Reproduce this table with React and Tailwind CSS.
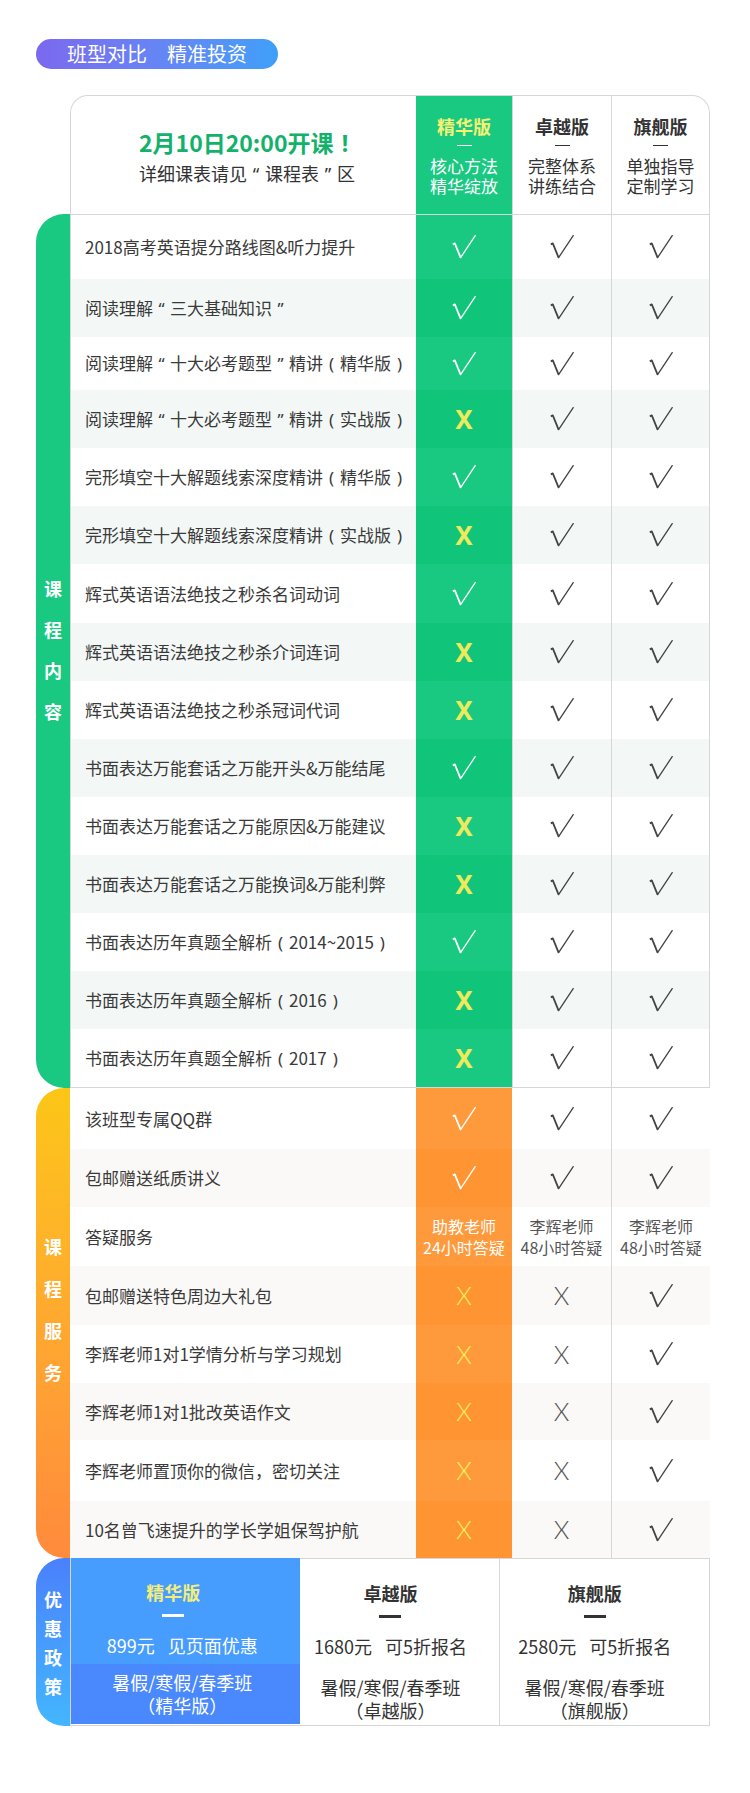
const courses = [
  ['2018高考英语提分路线图&听力提升', true, 'h-[64px]'],
  ['阅读理解“三大基础知识”', true, 'h-[58px]'],
  ['阅读理解“十大必考题型”精讲（精华版）', true, 'h-[53px]'],
  ['阅读理解“十大必考题型”精讲（实战版）', false, 'h-[58px]'],
  ['完形填空十大解题线索深度精讲（精华版）', true, 'h-[58px]'],
  ['完形填空十大解题线索深度精讲（实战版）', false, 'h-[58px]'],
  ['辉式英语语法绝技之秒杀名词动词', true, 'h-[59px]'],
  ['辉式英语语法绝技之秒杀介词连词', false, 'h-[58px]'],
  ['辉式英语语法绝技之秒杀冠词代词', false, 'h-[58px]'],
  ['书面表达万能套话之万能开头&万能结尾', true, 'h-[58px]'],
  ['书面表达万能套话之万能原因&万能建议', false, 'h-[58px]'],
  ['书面表达万能套话之万能换词&万能利弊', false, 'h-[58px]'],
  ['书面表达历年真题全解析（2014~2015）', true, 'h-[58px]'],
  ['书面表达历年真题全解析（2016）', false, 'h-[58px]'],
  ['书面表达历年真题全解析（2017）', false, 'h-[58px]'],
]

const services = [
  ['该班型专属QQ群', [true, true, true], 'h-[61px]'],
  ['包邮赠送纸质讲义', [true, true, true], 'h-[58px]'],
  ['答疑服务', null, 'h-[59px]'],
  ['包邮赠送特色周边大礼包', [false, false, true], 'h-[59px]'],
  ['李辉老师1对1学情分析与学习规划', [false, false, true], 'h-[58px]'],
  ['李辉老师1对1批改英语作文', [false, false, true], 'h-[57px]'],
  ['李辉老师置顶你的微信，密切关注', [false, false, true], 'h-[61px]'],
  ['10名曾飞速提升的学长学姐保驾护航', [false, false, true], 'h-[57px]'],
]

// full-width punctuation with the mark centred in its em box, as in the reference
const PUNCT = { '“': '“', '”': '”', '（': '(', '）': ')', '！': '!' }

function Punct({ text }) {
  return text.split(/([“”（）！])/).map((part, i) =>
    PUNCT[part] ? (
      <span key={i} className="inline-block w-[1em] text-center font-['Noto_Sans',sans-serif]">
        {PUNCT[part]}
      </span>
    ) : (
      part
    )
  )
}

function Check({ className }) {
  return (
    <svg width="24" height="24" viewBox="0 0 24 24" fill="none" className={className}>
      <path d="M0.8 9.4 L2.8 8.4 L8.6 22.6" stroke="currentColor" strokeWidth="1.8" strokeLinejoin="round" />
      <path d="M8.6 22.6 L23.2 0.6" stroke="currentColor" strokeWidth="1.3" strokeLinecap="round" />
    </svg>
  )
}

function Cross({ className }) {
  return <span className={`font-['Lato','Noto_Sans',sans-serif] text-[25px] leading-none font-light ${className}`}>X</span>
}

function ColHead({ title, lines, green }) {
  return (
    <div className={`flex h-full flex-col items-center pt-[20px] ${green ? 'bg-[#19c982]' : ''}`}>
      <div className={`h-[20px] text-[18px] leading-[20px] font-bold ${green ? 'text-[#f6f173]' : 'text-[#333]'}`}>{title}</div>
      <div className={`mt-[9px] h-px w-[15px] ${green ? 'bg-white' : 'bg-[#333]'}`} />
      <div className={`mt-[10px] text-center text-[17px] leading-[20px] ${green ? 'text-white' : 'text-[#333]'}`}>
        {lines.map((l) => (
          <div key={l}>{l}</div>
        ))}
      </div>
    </div>
  )
}

function SideLabel({ chars, className, gap }) {
  return (
    <div className={`flex w-[34px] flex-col items-center justify-center text-[18px] leading-[18px] font-bold text-white ${gap} ${className}`}>
      {chars.split('').map((c) => (
        <span key={c}>{c}</span>
      ))}
    </div>
  )
}

function PriceCol({ title, price, note, tag, blue, w, pr }) {
  return (
    <div className={`flex flex-col ${w} ${blue ? '' : 'border-t border-[#d6d6d6]'}`}>
      <div className={`flex h-[106px] flex-col items-center pt-[24px] ${pr} ${blue ? 'bg-[#479dfe]' : ''}`}>
        <div className={`h-[20px] text-[18px] leading-[20px] font-bold ${blue ? 'mr-[18px] text-[#f3ee7a]' : 'text-[#333]'}`}>{title}</div>
        <div className={`mt-[12px] h-[3px] w-[22px] ${blue ? 'mr-[18px] bg-white' : 'bg-[#333]'}`} />
        <div className={`mt-[17px] flex text-[18px] leading-[22px] ${blue ? 'text-white' : 'text-[#333]'}`}>
          <span>{price}</span>
          <span className="ml-[13px]">{note}</span>
        </div>
      </div>
      <div className={`flex h-[60px] flex-col items-center justify-center text-[18px] leading-[23px] ${pr} ${blue ? 'bg-[#4a89fd] text-white' : 'pt-[7px] text-[#333]'}`}>
        <div>暑假/寒假/春季班</div>
        <div>（{tag}）</div>
      </div>
    </div>
  )
}

export default function App() {
  return (
    <div className="w-[750px] bg-white pt-[39px] pb-[71px] font-['Noto_Sans_CJK_SC','Noto_Sans',sans-serif]">
      <div className="ml-[36px] flex h-[30px] w-[242px] items-center justify-center rounded-full bg-linear-to-r from-[#7b68ef] to-[#3d9ff9] text-[20px] text-white">
        班型对比　精准投资
      </div>

      <div className="mt-[26px] ml-[36px] w-[674px]">
        {/* header */}
        <div className="flex">
          <div className="w-[34px]" />
          <div className="flex h-[119px] w-[640px] overflow-hidden rounded-t-[18px] border border-b-0 border-[#d6d6d6]">
            <div className="flex w-[345px] flex-col pt-[33px] pl-[68px]">
              <div className="text-[23px] leading-[26px] font-bold text-[#13b26b]">
                <Punct text="2月10日20:00开课！" />
              </div>
              <div className="mt-[6px] text-[18px] leading-[22px] text-[#333]">
                <Punct text="详细课表请见“课程表”区" />
              </div>
            </div>
            <div className="w-[96px]">
              <ColHead title="精华版" lines={['核心方法', '精华绽放']} green />
            </div>
            <div className="w-[99px] border-l border-[#d6d6d6]">
              <ColHead title="卓越版" lines={['完整体系', '讲练结合']} />
            </div>
            <div className="w-[98px] border-l border-[#d6d6d6]">
              <ColHead title="旗舰版" lines={['单独指导', '定制学习']} />
            </div>
          </div>
        </div>

        {/* course content */}
        <div className="flex">
          <SideLabel chars="课程内容" gap="gap-[23px] pb-[4px]" className="rounded-l-[28px] bg-[#19c982]" />
          <div className="w-[640px] border border-[#d6d6d6]">
            {courses.map(([text, ok, h], i) => {
              const alt = i % 2 === 1
              return (
                <div key={text} className={`flex ${h} ${alt ? 'bg-[#f3f8f6]' : 'bg-white'}`}>
                  <div className="flex w-[345px] items-center pl-[14px] text-[17px] text-[#3a3a3a]">
                    <span>
                      <Punct text={text} />
                    </span>
                  </div>
                  <div className={`flex w-[96px] items-center justify-center ${alt ? 'bg-[#10c47a]' : 'bg-[#19c982]'}`}>
                    {ok ? (
                      <Check className="text-white" />
                    ) : (
                      <span className="font-['Noto_Sans',sans-serif] text-[26px] leading-none font-bold text-[#eeea5c]">X</span>
                    )}
                  </div>
                  <div className="flex w-[99px] items-center justify-center border-l border-[#d6d6d6]">
                    <Check className="text-[#444]" />
                  </div>
                  <div className="flex w-[98px] items-center justify-center border-l border-[#d6d6d6]">
                    <Check className="text-[#444]" />
                  </div>
                </div>
              )
            })}
          </div>
        </div>

        {/* services */}
        <div className="flex">
          <SideLabel
            chars="课程服务"
            gap="gap-[24px] pb-[28px]"
            className="rounded-l-[28px] bg-linear-to-b from-[#fcc615] to-[#ff8a3c]"
          />
          <div className="w-[640px]">
            {services.map(([text, marks, h], i) => {
              const alt = i % 2 === 1
              return (
                <div key={text} className={`flex ${h} ${alt ? 'bg-[#faf9f7]' : 'bg-white'}`}>
                  <div className="flex w-[346px] items-center pl-[15px] text-[17px] text-[#3a3a3a]">{text}</div>
                  <div className={`flex w-[96px] items-center justify-center ${alt ? 'bg-[#ff9433]' : 'bg-[#ff9a3c]'}`}>
                    {marks === null ? (
                      <div className="text-center text-[16px] leading-[21px] text-white">
                        <div>助教老师</div>
                        <div>24小时答疑</div>
                      </div>
                    ) : marks[0] ? (
                      <Check className="text-white" />
                    ) : (
                      <Cross className="text-[#f6ef5c]" />
                    )}
                  </div>
                  <div className="flex w-[99px] items-center justify-center">
                    {marks === null ? (
                      <div className="text-center text-[16px] leading-[21px] text-[#555]">
                        <div>李辉老师</div>
                        <div>48小时答疑</div>
                      </div>
                    ) : marks[1] ? (
                      <Check className="text-[#444]" />
                    ) : (
                      <Cross className="text-[#555]" />
                    )}
                  </div>
                  <div className="flex w-[99px] items-center justify-center border-l border-[#d6d6d6]">
                    {marks === null ? (
                      <div className="text-center text-[16px] leading-[21px] text-[#555]">
                        <div>李辉老师</div>
                        <div>48小时答疑</div>
                      </div>
                    ) : (
                      <Check className="text-[#444]" />
                    )}
                  </div>
                </div>
              )
            })}
          </div>
        </div>

        {/* pricing */}
        <div className="flex">
          <SideLabel
            chars="优惠政策"
            gap="gap-[11px]"
            className="rounded-l-[28px] bg-linear-to-b from-[#4a80fc] to-[#43b6fe]"
          />
          <div className="flex w-[640px] border-r border-b border-l border-[#d6d6d6]">
            <PriceCol title="精华版" price="899元" note="见页面优惠" tag="精华版" blue w="w-[229px]" pr="pr-[6px]" />
            <PriceCol title="卓越版" price="1680元" note="可5折报名" tag="卓越版" w="w-[200px]" pr="pr-[18px]" />
            <div className="w-px self-stretch bg-[#d6d6d6]" />
            <PriceCol title="旗舰版" price="2580元" note="可5折报名" tag="旗舰版" w="w-[209px]" pr="pr-[20px]" />
          </div>
        </div>
      </div>
    </div>
  )
}
